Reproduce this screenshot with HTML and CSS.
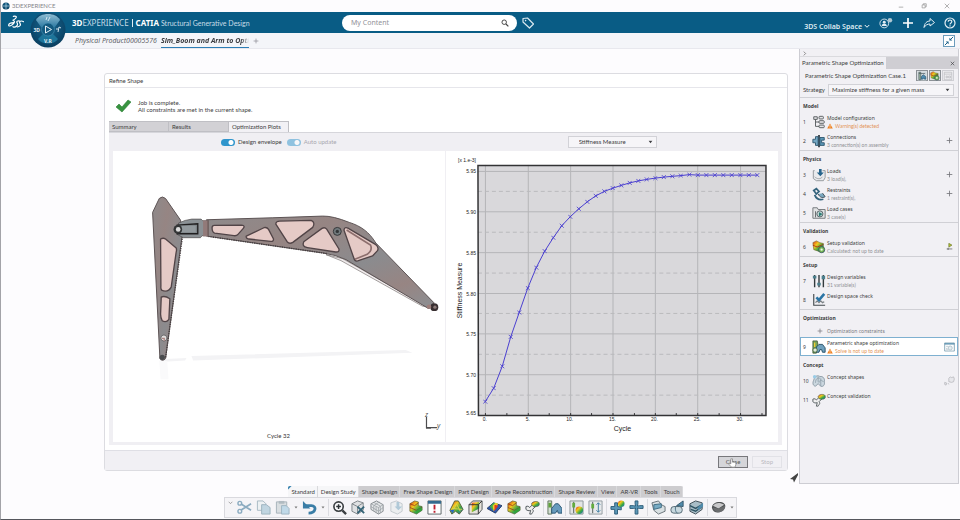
FILE: index.html
```html
<!DOCTYPE html>
<html lang="en">
<head>
<meta charset="utf-8">
<title>3DEXPERIENCE</title>
<link rel="stylesheet" href="styles.css">
</head>
<body>
<svg class="defs" aria-hidden="true">
  <defs>
    <linearGradient id="rainbow" x1="0" y1="0" x2="1" y2="1">
      <stop offset="0" stop-color="#e02a1c"/><stop offset=".35" stop-color="#f2c81d"/><stop offset=".65" stop-color="#38a845"/><stop offset="1" stop-color="#2467c4"/>
    </linearGradient>
    <linearGradient id="steel" x1="0" y1="0" x2="1" y2="1">
      <stop offset="0" stop-color="#8d8a8b"/><stop offset=".3" stop-color="#968583"/><stop offset=".6" stop-color="#8b8b8e"/><stop offset=".8" stop-color="#978583"/><stop offset="1" stop-color="#8b8f93"/>
    </linearGradient>
    <radialGradient id="dial" cx=".5" cy=".4" r=".6">
      <stop offset="0" stop-color="#1b6a93"/><stop offset=".7" stop-color="#0d4b70"/><stop offset="1" stop-color="#0a3d5e"/>
    </radialGradient>
    <linearGradient id="dialtop" x1="0" y1="0" x2="0" y2="1">
      <stop offset="0" stop-color="#8fbdd3"/><stop offset="1" stop-color="#2f7ba3"/>
    </linearGradient>
    <marker id="cross" viewBox="-3 -3 6 6" markerWidth="5" markerHeight="5" markerUnits="userSpaceOnUse">
      <path d="M-2.4-2.4 2.4 2.4M-2.4 2.4 2.4-2.4" stroke="#4a3fd0" stroke-width="1" fill="none"/>
    </marker>
  </defs>
  <symbol id="i-plus" viewBox="0 0 10 10"><path d="M5 1v8M1 5h8" stroke="currentColor" stroke-width="1.2" fill="none"/></symbol>
  <symbol id="i-close" viewBox="0 0 10 10"><path d="M1.5 1.5l7 7M8.5 1.5l-7 7" stroke="currentColor" stroke-width="1.3" fill="none"/></symbol>
  <symbol id="i-caret" viewBox="0 0 8 6"><path d="M1 1h6L4 5z" fill="currentColor"/></symbol>
  <symbol id="i-warn" viewBox="0 0 12 12"><path d="M6 .8 11.6 11H.4z" fill="#ee7f1d"/><path d="M6 4v3.6M6 8.6v1.3" stroke="#fff" stroke-width="1.3"/></symbol>
  <symbol id="i-tree" viewBox="0 0 16 16"><g fill="#e5e5e8" stroke="#4e5356"><path d="M2 2h4v3H2z"/><rect x="8" y="1.500" width="5" height="3" rx="1"/><rect x="8" y="6.500" width="6" height="3" rx="1"/><rect x="8" y="11.500" width="6" height="3" rx="1"/><path d="M4 5v8h4M4 8h4" fill="none"/></g></symbol>
  <symbol id="i-link" viewBox="0 0 16 16"><g stroke="#2b536b"><path d="M8 1v14" stroke="#2d3a40" stroke-width="2"/><path d="M7 3H4v3H1v4h3v3h3z" fill="#74a8c4"/><path d="M9 4h5v3h-3v3h3v3H9z" fill="#5c98b8"/></g></symbol>
  <symbol id="i-load" viewBox="0 0 16 16"><path d="M3 3H1.500v9L5 14.500h8L15 11V3h-3" fill="#e9eaed" stroke="#8b9196"/><path d="M3 10c3 3 7 3 9 0" fill="none" stroke="#9ba1a6"/><path d="M8 1h3v4h2.500l-4 4.500-4-4.500H8z" fill="#25638b"/></symbol>
  <symbol id="i-restraint" viewBox="0 0 16 16"><path d="M2 4l3-2 3 3-3 3zM3 9c2 5 6 6 10 5" fill="none" stroke="#35647d" stroke-width="2"/><path d="M7 8c2 4 5 5 8 3l-3-4" fill="#7aa7be" stroke="#37444b"/></symbol>
  <symbol id="i-folder" viewBox="0 0 16 16"><path d="M1 14V2h5l1 2h8v10z" fill="#e2e3e4" stroke="#6a6f72"/><circle cx="9" cy="9" r="3.500" fill="#bcd2d2" stroke="#4f5a5e"/><path d="M8 7v5l4-3z" fill="#2b7c73"/><path d="M4 6v7" stroke="#5a5f62"/></symbol>
  <symbol id="i-modulebox" viewBox="0 0 16 16"><path d="M1 1h14v14H1z" fill="#cfd8dc"/><path d="M3 14V2h3v12zM3 4h10" fill="#9fb9a2" stroke="#445156"/><path d="M7 13V9l3-3 4 3v4h-2l-1.500-2L9 13z" fill="#4f8cb0" stroke="#21506c"/></symbol>
  <symbol id="i-valid" viewBox="0 0 16 16"><path d="M1 3l4-2 4 2 4 1v4l-5 5-6-2z" fill="url(#rainbow)" stroke="#6a5a1c" stroke-width=".6"/><path d="M1 6l5 2 7-3" stroke="#b02c14" fill="none"/><circle cx="11" cy="11" r="3.500" fill="#77ba52" stroke="#35535f"/><circle cx="11" cy="11" r="1.300" fill="#eef4f0"/></symbol>
  <symbol id="i-sliders" viewBox="0 0 16 16"><path d="M3 1v14M8 1v14M13 1v14" stroke="#333a3d" stroke-width="1.600"/><path d="M3 2v3M8 10v3M13 2v4" stroke="#4c7f8d" stroke-width="4"/></symbol>
  <symbol id="i-space" viewBox="0 0 16 16"><path d="M2 1v13h13" fill="none" stroke="#43494d" stroke-width="1.300"/><path d="M4 11l2-2 2 2 2-2 2 2 2-1" fill="none" stroke="#7b8185" stroke-width="1.500"/><path d="M5 5l3 3 6-7" stroke="#2b75a5" stroke-width="3" fill="none"/></symbol>
  <symbol id="i-shape" viewBox="0 0 16 16"><path d="M1 15V1h5l1 5-2 9z" fill="#75a35b" stroke="#38482f" stroke-width=".8"/><path d="M5 14V8l3-3h4l3 4v5h-3l-1-3H9l-1 3z" fill="#6fa0bd" stroke="#1e4860"/><circle cx="3.500" cy="11.500" r="2.500" fill="#e3ead9" stroke="#436a3f"/><path d="M3 3v5" stroke="#f0cd34" stroke-width="1.500"/></symbol>
  <symbol id="i-concept" viewBox="0 0 16 16"><path d="M2 7C3 2 7 1 9 3c4-1 6 3 5 6 1 3-1 6-4 5l-3-3-3 3C0 13 1 9 2 7z" fill="#cbd7df" stroke="#83939f"/><path d="M4 10c0-5 3-6 5-5M8 10c0-3 3-4 5-1M7 3v6M10 5v9" fill="none" stroke="#91a1ac"/><circle cx="3" cy="3" r="2" fill="#99cbe6"/></symbol>
  <symbol id="i-branch" viewBox="0 0 16 16"><path d="M1 7c2-1 3 0 4 1l3-3 3 2-3 3c2 2 0 3-1 5H5l1-4c-2 1-4 0-5-1z" fill="#eee" stroke="#4c5357"/><path d="M7 4c1-3 7-3 8-1 1 3-1 4-3 4C9 8 7 6 7 4z" fill="url(#rainbow)" stroke="#4f5a41" stroke-width=".7"/></symbol>
  <symbol id="i-window" viewBox="0 0 16 14"><path d="M1 1h14v12H1z" fill="#fff" stroke="#56839a"/><path d="M1 2.500h14" stroke="#4d88a9" stroke-width="2"/><circle cx="9" cy="8.500" r="3" fill="#e6eef2" stroke="#9eb3bd"/><path d="M3 6h3M3 9h2M3 11h3" stroke="#a9b8bf"/></symbol>
  <symbol id="i-cut" viewBox="0 0 16 16"><path d="M4 4l11 7M4 11l11-7" stroke="#8babc0" stroke-width="1.800"/><circle cx="3" cy="3.500" r="2" fill="none" stroke="#8babc0" stroke-width="1.500"/><circle cx="3" cy="12" r="2" fill="none" stroke="#8babc0" stroke-width="1.500"/></symbol>
  <symbol id="i-copy" viewBox="0 0 16 16"><path d="M1.500 1h6l3 3v7h-9z" fill="#edf1f3" stroke="#a8b9c3"/><path d="M6 5h5l4 3v7H6z" fill="#c0d5e1" stroke="#9cb2be"/></symbol>
  <symbol id="i-paste" viewBox="0 0 16 16"><path d="M1.500 2h11v12h-11z" fill="#d9dee1" stroke="#a6b2ba"/><path d="M4 1h6v3H4z" fill="#b0bbc1"/><path d="M7 6h5l3 3v6H7z" fill="#c0d9e8" stroke="#9db4c1"/></symbol>
  <symbol id="i-undo" viewBox="0 0 16 16"><path d="M4 6h6c6 0 5 8-3 8" fill="none" stroke="#3a7da6" stroke-width="3"/><path d="M1 1v8h8z" fill="#3a7da6"/></symbol>
  <symbol id="i-find" viewBox="0 0 16 16"><circle cx="7" cy="7" r="5" fill="#f9f9fb" stroke="#3b3f42" stroke-width="1.700"/><path d="M11 11l4 4" stroke="#3b3f42" stroke-width="2.500"/><path d="M7 4.500v5M4.500 7h5" stroke="#2e3437" stroke-width="1.600"/></symbol>
  <symbol id="i-boxcut" viewBox="0 0 16 16"><path d="M1 4l6-3 6 2v8l-6 4-6-3z" fill="#dfe1e3" stroke="#7d8387"/><path d="M1 4l6 3 6-4M7 7v8" stroke="#7d8387" fill="none"/><path d="M7 7l7 7M14 7l-7 7" stroke="#356477" stroke-width="2"/></symbol>
  <symbol id="i-mesh" viewBox="0 0 16 16"><path d="M1 4l6-3 7 4v7l-5 3-8-5z" fill="#e4e6e8" stroke="#858b8f"/><path d="M1 4l8 4 5-3M9 8v7M4 2.500l7 4M4 6v6M6.500 7v7M1 7l8 5 5-4M4 6l6-4M11 7v7" stroke="#9ba1a5" fill="none" stroke-width=".8"/></symbol>
  <symbol id="i-import" viewBox="0 0 16 16"><path d="M2 3l6-2 6 3v8l-5 3-7-3z" fill="#eceef0" stroke="#c2c9ce"/><path d="M8 2h3v5h3l-4 4-4-4h2z" fill="#b0c9d8"/></symbol>
  <symbol id="i-result" viewBox="0 0 16 16"><path d="M2 4l5-3 4 1v4l4 1v4l-6 4-7-3z" fill="url(#rainbow)" stroke="#555b29" stroke-width=".7"/><path d="M2 4l5 2 4-3M2 8l7 3 6-3" stroke="#94301b" fill="none" stroke-width=".8"/><path d="M9 11l6-3v3l-6 4z" fill="#32a33a"/></symbol>
  <symbol id="i-alert" viewBox="0 0 16 16"><path d="M1 1h14v14H1z" fill="#fff" stroke="#5b6468"/><path d="M1 2.500h14" stroke="#346b8e" stroke-width="3"/><path d="M8 5v5M8 11.500v2" stroke="#be2130" stroke-width="2"/></symbol>
  <symbol id="i-peak" viewBox="0 0 16 16"><path d="M1 11L6 1h4l5 9-4 5-4-3-4 3z" fill="url(#rainbow)" stroke="#53633c"/><path d="M4 12L8 4l4 8M3 9l11 1" fill="none" stroke="#dcd34b"/><path d="M1 11l3 3 2-4z" fill="#2767c4"/></symbol>
  <symbol id="i-block" viewBox="0 0 16 16"><path d="M1 5l4-4h10v9l-4 5H1z" fill="#e8e3dc" stroke="#50555a"/><path d="M4 3l8-1v7l-8 4z" fill="url(#rainbow)"/><path d="M11 5v10M1 5h10l4-4" fill="none" stroke="#333" stroke-width="1"/></symbol>
  <symbol id="i-surf" viewBox="0 0 16 16"><path d="M0 9l7-6 9 3-7 8z" fill="#3058b0" stroke="#293e63"/><path d="M3 7l4-4 4 1-5 7z" fill="#45ad4d"/><path d="M6 6l3-3 3 1-5 8z" fill="#f0cf23"/><path d="M8 5l4 1-4 6z" fill="#dd3925"/></symbol>
  <symbol id="i-modules" viewBox="0 0 16 16"><path d="M1 15V1h4v14z" fill="#d3dfd1" stroke="#60735e"/><path d="M3 3v5" stroke="#61a23c" stroke-width="3"/><path d="M5 14V9l4-5h3l4 5v5h-4l-1-3-2 3z" fill="#679bbd" stroke="#2b5874"/></symbol>
  <symbol id="i-param" viewBox="0 0 16 16"><path d="M1 1h14v14H1z" fill="#e1e4e5" stroke="#8b9598"/><path d="M5 2v12" stroke="#4d5956"/><path d="M5 3v5" stroke="#63ab3e" stroke-width="3"/><circle cx="11" cy="11" r="4" fill="url(#rainbow)"/></symbol>
  <symbol id="i-range" viewBox="0 0 16 16"><path d="M1 1h14v14H1z" fill="#e7e9eb" stroke="#929ca0"/><path d="M5 2v12" stroke="#4d5956"/><path d="M5 4v5" stroke="#63ab3e" stroke-width="3"/><path d="M11 3v10M9 5l2-2 2 2M9 11l2 2 2-2" fill="none" stroke="#3a7ba0"/></symbol>
  <symbol id="i-cross" viewBox="0 0 16 16"><path d="M6.500 1h3v3L9 6.500l2.500-.5h3.500v3h-4l-2-.5.500 2.500v4h-3v-4l.5-2.500-2 .5H1V6h3.500l2.500.5-.5-2.500z" fill="#5b97b7" stroke="#2b5c79"/></symbol>
  <symbol id="i-crosscolor" viewBox="0 0 16 16"><path d="M5 3h3v4l4 .5v3L8 10v5H5v-5H1V7h4z" fill="#5b97b7" stroke="#2b5c79"/><circle cx="12" cy="4" r="3.500" fill="url(#rainbow)"/></symbol>
  <symbol id="i-solid" viewBox="0 0 16 16"><path d="M1 3l7-2 3 4 4 2v5l-7 3-5-4z" fill="#d9e0e3" stroke="#687177"/><path d="M3 5l8-1v4l-8 2z" fill="#77abc4" stroke="#3f6c83"/></symbol>
  <symbol id="i-cyl" viewBox="0 0 16 16"><rect x="1" y="7" width="12" height="7" rx="3" fill="#c8d8df" stroke="#50646f"/><path d="M6 7c-1 4 1 7 2 7" fill="none" stroke="#4c6f83"/><path d="M7 6l7-5v6z" fill="#518cad" stroke="#33566b"/></symbol>
  <symbol id="i-stack" viewBox="0 0 16 16"><path d="M1 4l6-3 7 2v7l-7 5-6-3z" fill="#a8bdc7" stroke="#3f4d55"/><path d="M1 6l6 3 7-4M2 10l5 2 7-5" fill="none" stroke="#2e5362" stroke-width="1.500"/><path d="M9 8l6-5v4l-5 4z" fill="#4f8bab"/></symbol>
  <symbol id="i-render" viewBox="0 0 16 16"><path d="M1 8c0-4 4-6 8-6 5 0 7 3 6 6-2 6-13 8-14 0z" fill="#4e5153"/><path d="M2 6c4-4 8-3 12-1L8 9z" fill="#c8c8ca"/><path d="M2 8l6 1 7-3c0 3-1 5-3 6-4 2-9 1-10-4z" fill="#6a6c6e"/></symbol>
</svg>

<div class="app">
  <header class="titlebar">
    <svg class="app-icon" viewBox="0 0 10 10"><circle cx="5" cy="5" r="4.500" fill="url(#dial)"/><path d="M1 5h8M5 1v8" stroke="#c4dbe6" stroke-width=".8"/></svg>
    <span>3DEXPERIENCE</span>
    <div class="window-buttons">
      <button aria-label="Minimize"><svg viewBox="0 0 8 8"><path d="M1 5.500h6" stroke="#999"/></svg></button>
      <button aria-label="Restore"><svg viewBox="0 0 8 8"><path d="M1.500 2.500h4v4h-4zM3 2.500V1h4v4H5.500" fill="none" stroke="#999"/></svg></button>
      <button aria-label="Close window"><svg viewBox="0 0 8 8"><path d="M1 1l6 6M7 1L1 7" stroke="#999"/></svg></button>
    </div>
  </header>

  <nav class="topbar">
    <svg class="logo" viewBox="0 0 48 44"><path d="M16 2c8-2 12 1 6 7-2 2-5 4-8 5 8 1 7 7-1 13C8 31 1 33 2 28c1-4 8-7 15-7M35 16c-7-1-10 1-8 5 2 3 3 6-1 10-3 3-8 4-11 2M47 18c-8-4-15-1-11 5 3 5 1 9-8 11" fill="none" stroke="#fff" stroke-width="3.500" stroke-linecap="round"/></svg>
    <button class="compass" aria-label="Compass">
      <svg viewBox="0 0 36 36"><circle cx="18" cy="18" r="17.500" fill="url(#dial)"/><path d="M6 8c4-8 20-8 24 0l-5 7H11z" fill="url(#dialtop)"/><path d="M8 27c4 6 16 6 20 0l-5-5H13z" fill="#1d7499"/><circle cx="18" cy="17.500" r="6.500" fill="#135a80" stroke="#4c95b9" stroke-width=".6"/><path d="M15.500 14v7l6-3.500z" fill="none" stroke="#e5eff5" stroke-width="1"/><path d="M16 8l1-3M18 9l2-4M28 20l1-5 2 1M26 17h2" stroke="#d2e4ee" fill="none"/><text x="3.500" y="20" class="dial-text">3D</text><text x="14" y="30.500" class="dial-text">V.R</text></svg>
    </button>
    <div class="brand"><b>3D</b>EXPERIENCE<i></i><b>CATIA</b><span>Structural Generative Design</span></div>
    <div class="search">
      <input type="search" aria-label="Search" placeholder="My Content">
      <button aria-label="Run search"><svg viewBox="0 0 10 10"><circle cx="4" cy="4" r="2.800" fill="none" stroke="#444" stroke-width="1.200"/><path d="M6.200 6.200l3 3" stroke="#444" stroke-width="1.500"/></svg></button>
    </div>
    <button class="tag" aria-label="Tags"><svg viewBox="0 0 12 12"><path d="M1 1.500L5.500 1l6 6L7.500 11 1 5z" fill="none" stroke="#d9e8ef" stroke-width="1.200" stroke-linejoin="round"/><circle cx="3.600" cy="3.600" r=".8" fill="#d9e8ef"/></svg></button>
    <div class="actions">
      <button class="space">3DS Collab Space<svg viewBox="0 0 8 6"><path d="M1 1l3 3 3-3" fill="none" stroke="#fff" stroke-width="1.300"/></svg></button>
      <button aria-label="Profile"><svg class="wide" viewBox="0 0 16 12"><circle cx="6" cy="6.500" r="5" fill="none" stroke="#e2edf3"/><circle cx="6" cy="5" r="1.700" fill="#e2edf3"/><path d="M3 9.500c0-4 6-4 6 0z" fill="#e2edf3"/><circle cx="12.500" cy="2.800" r="2.600" fill="#aec7d3"/></svg></button>
      <button aria-label="Add"><svg viewBox="0 0 12 12"><path d="M6 1v10M1 6h10" stroke="#fff" stroke-width="1.700"/></svg></button>
      <button aria-label="Share"><svg viewBox="0 0 12 12"><path d="M1 10.500C1.500 6 4 4 7 4V1.500L11.500 5.500 7 9V7C4.500 7 2.500 8 1 10.500z" fill="none" stroke="#e2edf3" stroke-linejoin="round"/></svg></button>
      <button aria-label="Help"><svg viewBox="0 0 12 12"><circle cx="6" cy="6" r="5" fill="none" stroke="#e2edf3" stroke-width="1.200"/><path d="M4.200 4.700c0-2.300 3.700-2.200 3.600 0C7.700 6 6 6 6 7.500M6 8.200v1.200" fill="none" stroke="#e2edf3" stroke-width="1.200"/></svg></button>
    </div>
  </nav>

  <div class="doc-tabs">
    <button>Physical Product00005576</button>
    <button class="current"><span>Sim_Boom and Arm to Opti</span></button>
    <button class="add" aria-label="New tab"><svg viewBox="0 0 10 10"><use href="#i-plus"/></svg></button>
    <button class="collapse" aria-label="Collapse"><svg viewBox="0 0 12 12"><path d="M6.500 5.500V2l3.500 3.500zM5.500 6.500V10L2 6.500z" fill="#185f88"/><path d="M7.500 4.500L11 1M4.500 7.500L1 11" stroke="#185f88" stroke-width="1.200"/></svg></button>
  </div>

  <main class="workspace">
    <section class="dialog">
      <h1>Refine Shape</h1>
      <div class="dialog-body">
        <div class="message">
          <svg viewBox="0 0 16 14"><path d="M1 8l3-3 3 3 6-7 3 2-9 10z" fill="#37933f" stroke="#2b8036" stroke-width=".6"/></svg>
          <p>Job is complete.<br>All constraints are met in the current shape.</p>
        </div>
        <div class="plot-tabs">
          <button>Summary</button><button>Results</button><button class="current">Optimization Plots</button>
        </div>
        <div class="plots">
          <div class="plot-tools">
            <div class="switches">
              <label><input type="checkbox" checked>Design envelope</label>
              <label class="off"><input type="checkbox" checked disabled>Auto update</label>
            </div>
            <div class="measure">
              <select aria-label="Plotted measure"><option>Stiffness Measure</option></select>
              <svg viewBox="0 0 8 6"><use href="#i-caret"/></svg>
            </div>
          </div>
          <div class="cards">
            <svg class="card" viewBox="113 151 333 292" role="img" aria-label="Optimized boom and arm">
              <g transform="translate(140 180) scale(.33333)">
                <path d="M155 530L800 512 820 520 160 544zM60 540l80-4-4 8-76 4z" fill="#f3f3f5"/>
                <path d="M58 545h24l4 55H62z" fill="#fafafb"/>
                <path d="M560 225l50 12 240 136 30 12-30-5-245-137z" fill="#f0ebec" stroke="#77716f" stroke-width="2"/>
                <path d="M200 120L400 114 550 109Q580 108 630 128C665 139 690 157 710 190L885 370 870 388 620 240Q590 225 550 220L200 169z" fill="url(#steel)" stroke="#5c5354" stroke-width="3"/>
                <path d="M38 98L58 56Q67 47 77 56L122 121 128 160 77 538Q67 548 60 538z" fill="url(#steel)" stroke="#5c5354" stroke-width="3"/>
                <path d="M128 170L77 535M205 170l360 52" stroke="#443d3f" stroke-width="4" stroke-dasharray="4 3" fill="none"/>
                <path d="M116 130l20-8 20-4h28l5 5h15v45h-17l-5 6h-52l-18-10z" fill="#8b9195" stroke="#4a4546" stroke-width="2"/>
                <path d="M190 122h17v48h-17z" fill="#927a79"/><path d="M205 121v48" stroke="#463f40" stroke-width="2"/>
                <path d="M112 136l62-4v30h-62z" fill="#7c8387" stroke="#201f20" stroke-width="4"/><path d="M124 138h44v20h-44z" fill="#92999d"/>
                <circle cx="114" cy="149" r="13" fill="#343637"/><circle cx="115" cy="149" r="7" fill="#ddd"/>
                <g fill="#e5cac6" stroke="#514447" stroke-width="4" stroke-linejoin="round">
                  <path d="M62 178q8-5 15 0l32 27q2 6 0 12L94 323q-10 18-29 9-3-5-2-12z"/>
                  <path d="M64 353q10-6 26 5l-3 62q-8 11-20 4-5-8-5-20z"/>
                  <path d="M217 144q0-7 7-7l82-1q12 2 5 10l-16 18q-4 5-12 4l-58-8q-8-2-8-16z"/>
                  <path d="M320 169l53-25q9-3 14 5l15 29q0 8-8 7l-66-7q-10-2-8-9z"/>
                  <path d="M409 133q0-9 12-9l94-2q14 6 5 21l-60 45q-10 6-17-2z"/>
                  <path d="M493 186l55-40q8-5 14 2l37 60q2 10-10 9l-85-13q-18-3-11-18z"/>
                  <path d="M614 151q2-11 12-6l84 50q10 8 5 18l-15 16-45 15q-8 2-11-8z"/>
                </g>
                <path d="M622 151l72 45q7 16-10 28l-37 15" fill="none" stroke="#8c6e6d" stroke-width="5"/>
                <circle cx="594" cy="155" r="12" fill="#70797c" stroke="#373739" stroke-width="3"/><circle cx="594" cy="155" r="5" fill="#333638"/>
                <circle cx="72" cy="476" r="9" fill="#e1dfdf" stroke="#4c4a4b" stroke-width="2"/><path d="M66 477h7v8" stroke="#ad8784" stroke-width="4" fill="none"/>
                <circle cx="67" cy="534" r="8" fill="#4a4c4e"/>
                <circle cx="886" cy="383" r="12" fill="#382f31"/><circle cx="888" cy="383" r="5" fill="#8b7a78"/><circle cx="870" cy="382" r="7" fill="#9d7e7b"/>
              </g>
              <path d="M427.500 418v10.500H438M427 429h5" stroke="#4d4d4f" stroke-width="1.200" fill="none"/>
              <text x="426" y="418" class="axis-name">z</text><text x="438" y="429" class="axis-name">y</text>
              <text x="279" y="439" class="cycle-label">Cycle 32</text>
            </svg>
            <svg class="card" viewBox="447 151 331 292" role="img" aria-label="Stiffness measure by cycle">
              <path d="M478 165h289v251H478z" fill="#d9d8db"/>
              <path d="M485.500 165v251M528.500 165v251M571 165v251M613.500 165v251M656 165v251M698.500 165v251M741.500 165v251M478 171.500h289M478 212h289M478 253h289M478 294h289M478 334.500h289M478 375.500h289" stroke="#b5b5b8" fill="none"/>
              <path d="M478 191.500h289M478 232.500h289M478 273.500h289M478 314h289M478 355h289M478 396h289" stroke="#bababd" stroke-dasharray="4 3" fill="none"/>
              <path d="M478 165.500h289v251H478.500z" fill="none" stroke="#333335" stroke-width="1.500"/>
              <path d="M485.500 416v-2M507 416v-2M528.500 416v-2M549.500 416v-2M571 416v-2M592 416v-2M613.500 416v-2M635 416v-2M656 416v-2M677 416v-2M698.500 416v-2M720 416v-2M741.500 416v-2M763 416v-2" stroke="#333335"/>
              <polyline class="curve" points="485.300,402.500 493.800,389 502.400,367 510.900,337.500 519.400,313 528,288.500 536.500,268 545,251.500 553.600,238 562.100,226 570.600,217 579.200,209 587.700,202 596.200,196 604.800,191.500 613.300,188.300 621.800,185.500 630.300,183 638.900,181 647.400,179.500 656,178.200 664.500,177.200 673,176.400 681.600,175.700 690.100,174.700 698.600,175.200 707.200,175.200 715.700,175.200 724.200,175.200 732.700,175.200 741.300,175.200 749.800,175.200 758.300,175.200"/>
              <g class="ticks-y"><text x="476" y="173">5.95</text><text x="476" y="214">5.90</text><text x="476" y="255">5.85</text><text x="476" y="296">5.80</text><text x="476" y="337">5.75</text><text x="476" y="378">5.70</text><text x="476" y="416">5.65</text><text x="476" y="162">[x 1.e-3]</text></g>
              <g class="ticks-x"><text x="485" y="422">0.</text><text x="528" y="422">5.</text><text x="570" y="422">10.</text><text x="613" y="422">15.</text><text x="655" y="422">20.</text><text x="698" y="422">25.</text><text x="741" y="422">30.</text></g>
              <text x="623" y="432" class="axis-title">Cycle</text>
              <text transform="translate(462 291) rotate(-90)" class="axis-title">Stiffness Measure</text>
            </svg>
          </div>
        </div>
      </div>
      <footer>
        <button class="close">Close<svg class="pointer" viewBox="0 0 10 12"><path d="M3 1v6L1 6v2l3 3h4l1-3V5H5V1z" fill="#fff" stroke="#777" stroke-width=".8"/></svg></button>
        <button disabled>Stop</button>
      </footer>
    </section>

    <aside class="assistant">
      <div class="grip"><svg viewBox="0 0 6 8"><path d="M1 1l3 3-3 3" stroke="#555" fill="none"/></svg></div>
      <div class="panel-tab"><h2>Parametric Shape Optimization</h2><button aria-label="Close panel"><svg viewBox="0 0 10 10"><use href="#i-close"/></svg></button></div>
      <div class="case">
        <span>Parametric Shape Optimization Case.1</span>
        <button aria-label="Modules"><svg viewBox="0 0 16 16"><use href="#i-modulebox"/></svg></button>
        <button aria-label="Results"><svg viewBox="0 0 16 16"><use href="#i-valid"/></svg></button>
        <button aria-label="Report" disabled><svg viewBox="0 0 16 16"><path d="M2 2h12v12H2zM2 5h12M5 8h2v3H5zM9 8h3v3H9z" fill="none" stroke="#b5b5ba"/></svg></button>
      </div>
      <div class="strategy">
        <label for="strategy">Strategy</label>
        <div class="pick"><select id="strategy"><option>Maximize stiffness for a given mass</option></select><svg viewBox="0 0 8 6"><use href="#i-caret"/></svg></div>
      </div>

      <section>
        <h3>Model</h3>
        <div class="step"><em>1</em><svg viewBox="0 0 16 16"><use href="#i-tree"/></svg><div><p>Model configuration</p><small class="warn"><svg viewBox="0 0 12 12"><use href="#i-warn"/></svg>Warning(s) detected</small></div></div>
        <div class="step"><em>2</em><svg viewBox="0 0 16 16"><use href="#i-link"/></svg><div><p>Connections</p><small>3 connection(s) on assembly</small></div><button aria-label="Add connection"><svg viewBox="0 0 10 10"><use href="#i-plus"/></svg></button></div>
      </section>
      <section>
        <h3>Physics</h3>
        <div class="step"><em>3</em><svg viewBox="0 0 16 16"><use href="#i-load"/></svg><div><p>Loads</p><small>3 load(s),</small></div><button aria-label="Add load"><svg viewBox="0 0 10 10"><use href="#i-plus"/></svg></button></div>
        <div class="step"><em>4</em><svg viewBox="0 0 16 16"><use href="#i-restraint"/></svg><div><p>Restraints</p><small>1 restraint(s),</small></div><button aria-label="Add restraint"><svg viewBox="0 0 10 10"><use href="#i-plus"/></svg></button></div>
        <div class="step"><em>5</em><svg viewBox="0 0 16 16"><use href="#i-folder"/></svg><div><p>Load cases</p><small>3 case(s)</small></div></div>
      </section>
      <section>
        <h3>Validation</h3>
        <div class="step"><em>6</em><svg viewBox="0 0 16 16"><use href="#i-valid"/></svg><div><p>Setup validation</p><small>Calculated: not up to date</small></div><button aria-label="Run validation"><svg viewBox="0 0 10 10"><path d="M4 .5v5.500L8.500 3z" fill="#b6cc2f" stroke="#596022" stroke-width=".8"/><path d="M1 8.500h8M3 7v3" stroke="#555"/></svg></button></div>
      </section>
      <section>
        <h3>Setup</h3>
        <div class="step"><em>7</em><svg viewBox="0 0 16 16"><use href="#i-sliders"/></svg><div><p>Design variables</p><small>31 variable(s)</small></div></div>
        <div class="step"><em>8</em><svg viewBox="0 0 16 16"><use href="#i-space"/></svg><div><p>Design space check</p><small></small></div></div>
      </section>
      <section>
        <h3>Optimization</h3>
        <button class="constraints"><svg viewBox="0 0 10 10"><use href="#i-plus"/></svg>Optimization constraints</button>
        <div class="step selected"><em>9</em><svg viewBox="0 0 16 16"><use href="#i-shape"/></svg><div><p>Parametric shape optimization</p><small class="warn"><svg viewBox="0 0 12 12"><use href="#i-warn"/></svg>Solve is not up to date</small></div><button class="big" aria-label="Open results"><svg viewBox="0 0 16 14"><use href="#i-window"/></svg></button></div>
      </section>
      <section class="plain">
        <h3>Concept</h3>
        <div class="step"><em>10</em><svg viewBox="0 0 16 16"><use href="#i-concept"/></svg><div><p>Concept shapes</p><small></small></div><button class="big faint" aria-label="Generate shapes"><svg viewBox="0 0 16 14"><path d="M7 3l2-2 2 1 3-1 1 3-1 4-3 1-4-1zM1 9l3 1-1 3-2-1zM6 10l1 2" fill="#e4e4e8" stroke="#94969a"/></svg></button></div>
        <div class="step"><em>11</em><svg viewBox="0 0 16 16"><use href="#i-branch"/></svg><div><p>Concept validation</p><small></small></div></div>
      </section>
      <svg class="resize" viewBox="0 0 9 10"><path d="M8 0L0 6l3 .5 1 3L8 2z" fill="#444"/></svg>
    </aside>
  </main>

  <div class="action-bar">
    <div class="bar-tabs">
      <button class="current">Standard</button><button class="current">Design Study</button><button>Shape Design</button><button>Free Shape Design</button><button>Part Design</button><button>Shape Reconstruction</button><button>Shape Review</button><button>View</button><button>AR-VR</button><button>Tools</button><button>Touch</button>
    </div>
    <div class="tools">
      <button class="fold" aria-label="Fold"><svg viewBox="0 0 8 6"><path d="M1 1l3 3 3-3" fill="none" stroke="#777"/></svg></button>
      <button aria-label="Cut"><svg viewBox="0 0 16 16"><use href="#i-cut"/></svg></button>
      <button aria-label="Copy"><svg viewBox="0 0 16 16"><use href="#i-copy"/></svg></button>
      <button aria-label="Paste"><svg viewBox="0 0 16 16"><use href="#i-paste"/></svg></button>
      <button class="more" aria-label="Paste options"><svg viewBox="0 0 8 6"><use href="#i-caret"/></svg></button>
      <button aria-label="Undo"><svg viewBox="0 0 16 16"><use href="#i-undo"/></svg></button>
      <button class="more" aria-label="Undo history"><svg viewBox="0 0 8 6"><use href="#i-caret"/></svg></button>
      <hr>
      <button aria-label="Find"><svg viewBox="0 0 16 16"><use href="#i-find"/></svg></button>
      <button aria-label="Partition"><svg viewBox="0 0 16 16"><use href="#i-boxcut"/></svg></button>
      <button aria-label="Mesh"><svg viewBox="0 0 16 16"><use href="#i-mesh"/></svg></button>
      <button aria-label="Import"><svg viewBox="0 0 16 16"><use href="#i-import"/></svg></button>
      <button aria-label="Results"><svg viewBox="0 0 16 16"><use href="#i-result"/></svg></button>
      <button aria-label="Diagnostics"><svg viewBox="0 0 16 16"><use href="#i-alert"/></svg></button>
      <hr>
      <button aria-label="Stress"><svg viewBox="0 0 16 16"><use href="#i-peak"/></svg></button>
      <button aria-label="Section"><svg viewBox="0 0 16 16"><use href="#i-block"/></svg></button>
      <button aria-label="Surface"><svg viewBox="0 0 16 16"><use href="#i-surf"/></svg></button>
      <button aria-label="Field"><svg viewBox="0 0 16 16"><use href="#i-result"/></svg></button>
      <button aria-label="Concept"><svg viewBox="0 0 16 16"><use href="#i-branch"/></svg></button>
      <hr>
      <button aria-label="Modules"><svg viewBox="0 0 16 16"><use href="#i-modules"/></svg></button>
      <hr>
      <button aria-label="Parameters"><svg viewBox="0 0 16 16"><use href="#i-param"/></svg></button>
      <button aria-label="Range"><svg viewBox="0 0 16 16"><use href="#i-range"/></svg></button>
      <hr>
      <button aria-label="Validate joint"><svg viewBox="0 0 16 16"><use href="#i-crosscolor"/></svg></button>
      <button aria-label="Joint"><svg viewBox="0 0 16 16"><use href="#i-cross"/></svg></button>
      <hr>
      <button aria-label="Solid"><svg viewBox="0 0 16 16"><use href="#i-solid"/></svg></button>
      <button aria-label="Cylinder"><svg viewBox="0 0 16 16"><use href="#i-cyl"/></svg></button>
      <button aria-label="Stack"><svg viewBox="0 0 16 16"><use href="#i-stack"/></svg></button>
      <hr>
      <button aria-label="Rendering"><svg viewBox="0 0 16 16"><use href="#i-render"/></svg></button>
      <button class="more" aria-label="Rendering options"><svg viewBox="0 0 8 6"><use href="#i-caret"/></svg></button>
    </div>
  </div>
</div>
</body>
</html>
```
FILE: styles.css
```css
* { box-sizing: border-box; }
body { margin: 0; font: 6px/8px Lato, "Noto Sans", sans-serif; color: #3c3d40; background: #fdfcfe; }
button, input, select { font: inherit; color: inherit; margin: 0; padding: 0; border: 0; background: none; }
button { display: flex; align-items: center; justify-content: center; white-space: nowrap; }
h1, h2, h3, p { margin: 0; font-size: inherit; font-weight: 400; }
svg { display: block; flex: none; }
.defs { position: absolute; width: 0; height: 0; }
.app { display: flex; flex-direction: column; min-height: 100vh; border-left: 1px solid #a3a3a8; border-bottom: 1px solid #55565c; }

.titlebar { display: flex; align-items: center; height: 12px; padding-left: 1px; gap: 2px; color: #85858a; }
.app-icon { width: 8px; height: 8px; }
.window-buttons { display: flex; gap: 17px; margin-left: auto; padding-right: 10px; }
.window-buttons svg { width: 6px; height: 6px; }

.topbar { position: relative; display: flex; align-items: center; height: 21px; background: #095c85; color: #dfebf1; font-family: "Noto Sans", sans-serif; font-size: 7px; }
.logo { width: 16px; height: 16px; margin-left: 7px; }
.compass { position: absolute; left: 29px; top: 0; z-index: 1; }
.compass svg { width: 36px; height: 36px; }
.dial-text { font: bold 5px "Noto Sans", sans-serif; fill: #e4eef4; }
.brand { display: flex; align-items: center; width: 270px; margin-left: 48px; font-size: 8px; color: #c8dde8; }
.brand b { color: #fff; }
.brand i { width: 1px; height: 8px; margin: 0 3px; background: #e0edf3; }
.brand span { margin-left: 2px; font-family: Lato, sans-serif; font-size: 7px; }
.search { display: flex; align-items: center; width: 175px; height: 16px; padding: 0 8px 0 9px; border-radius: 8px; background: #fff; }
.search input { flex: 1; min-width: 0; outline: 0; appearance: none; }
.search input::placeholder { color: #929298; opacity: 1; }
.search svg { width: 8px; height: 8px; }
.tag { margin-left: 5px; }
.tag svg { width: 12px; height: 12px; }
.actions { display: flex; align-items: center; gap: 9px; margin-left: auto; padding-right: 4px; }
.actions svg { width: 12px; height: 12px; }
.actions .wide { width: 14px; }
.actions .space { padding-top: 8px; font-weight: 600; }
.actions .space svg { width: 6px; height: 5px; margin-left: 2px; }

.doc-tabs { display: flex; align-items: stretch; height: 16px; padding-left: 74px; background: #f4f5f9; border-bottom: 1px solid #e8e8ee; font-family: "Noto Sans", sans-serif; font-size: 7px; font-style: italic; color: #606166; }
.doc-tabs .current { justify-content: flex-start; width: 88px; margin-left: 4px; padding-top: 1px; overflow: hidden; border-bottom: 1px solid #2d7db5; color: #3b3c40; font-weight: 700; }
.doc-tabs .current span { width: 88px; overflow: hidden; text-align: left; mask-image: linear-gradient(90deg, #000 80px, transparent 88px); }
.doc-tabs .add { margin-left: 4px; color: #909096; }
.doc-tabs .add svg { width: 6px; height: 6px; }
.doc-tabs .collapse { align-self: center; width: 12px; height: 12px; margin: 0 5px 0 auto; border: 1px solid #6c9cbc; background: #fff; }
.doc-tabs .collapse svg { width: 10px; height: 10px; }

.workspace { display: flex; flex: 1; }
.dialog { display: flex; flex-direction: column; flex: 1; min-width: 0; margin: 24px 11px 13px 103px; border: 1px solid #dcdce1; border-radius: 3px; background: #fff; }
.dialog h1 { height: 14px; padding: 2px 4px; border-bottom: 1px solid #e6e6eb; line-height: 9px; }
.dialog-body { display: flex; flex-direction: column; flex: 1; padding: 10px 5px 5px 4px; }
.message { display: flex; align-items: center; gap: 7px; padding-left: 6px; height: 15px; line-height: 7px; }
.message svg { width: 16px; height: 14px; }
.plot-tabs { display: flex; height: 11px; margin-top: 8px; }
.plot-tabs button { width: 60px; justify-content: flex-start; padding-left: 3px; background: #d2d1d5; border: 1px solid #bfbfc4; border-left-width: 0; }
.plot-tabs .current { background: #f2f1f5; border-bottom: 0; }
.plots { display: flex; flex-direction: column; flex: 1; padding: 0 4px 3px; background: #f0eff3; border-top: 1px solid #d6d6db; }
.plot-tools { display: grid; grid-template-columns: 1fr 1fr; gap: 2px; height: 18px; align-items: center; }
.switches { display: flex; justify-content: center; gap: 5px; }
.switches label { display: flex; align-items: center; gap: 3px; }
.switches .off { color: #a7a7ae; }
.switches input { appearance: none; width: 14px; height: 7px; border-radius: 4px; background: radial-gradient(circle at 10px 50%, #fff 2px, #2f95cc 3px); }
.switches .off input { opacity: .5; }
.measure, .pick { position: relative; display: flex; align-items: center; border: 1px solid #d2d2d7; background: #f6f5f8; }
.measure { justify-self: center; width: 89px; height: 12px; }
.measure select { width: 100%; padding-left: 10px; appearance: none; }
.measure svg, .pick svg { position: absolute; right: 3px; width: 5px; height: 4px; pointer-events: none; }
.cards { display: grid; grid-template-columns: 1fr 1fr; gap: 1px; flex: 1; }
.card { contain: size; width: 100%; height: 100%; background: #fff; }
.axis-name { font: italic 7px "Noto Sans", sans-serif; fill: #555; }
.cycle-label { font: 6px Lato, sans-serif; text-anchor: middle; fill: #333; }
.curve { fill: none; stroke: #4a3fd0; stroke-width: 1; marker: url(#cross); }
.ticks-x, .ticks-y { font: 5px "Liberation Sans", sans-serif; fill: #222; }
.ticks-x { text-anchor: middle; }
.ticks-y { text-anchor: end; }
.axis-title { font: 7px "Liberation Sans", sans-serif; text-anchor: middle; fill: #222; }
.dialog footer { display: flex; align-items: center; justify-content: flex-end; gap: 4px; height: 20px; padding: 2px 5px 0 0; border-top: 1px solid #dfdfe5; background: #f1f0f4; }
.dialog footer button { position: relative; width: 30px; height: 12px; border: 1px solid #e2e2e7; color: #b9b9be; }
.dialog footer .close { border-color: #77777b; background: #d5d5d9; color: #555; }
.pointer { position: absolute; left: 9px; top: 1px; width: 9px; height: 10px; }

.assistant { position: relative; width: 160px; margin: 0 1px 0 0; background: #f1f0f4; border: 1px solid #cdcdd3; border-top: 0; }
.grip { height: 8px; padding: 2px 3px; border-bottom: 1px solid #dadade; }
.grip svg { width: 4px; height: 5px; }
.panel-tab { display: flex; height: 12px; background: #cfced3; }
.panel-tab h2 { width: 86px; padding: 1px 2px; background: #f1f0f4; line-height: 10px; white-space: nowrap; }
.panel-tab button { margin-left: auto; padding-right: 3px; }
.panel-tab svg { width: 5px; height: 5px; }
.case { display: flex; align-items: center; gap: 1px; height: 13px; padding: 0 4px 0 5px; }
.case span { flex: 1; white-space: nowrap; }
.case button { width: 12px; height: 11px; border: 1px solid #8c9196; background: #dddfe2; }
.case button:disabled { border-color: #cfcfd4; background: #eeeef1; }
.case svg { width: 10px; height: 10px; }
.strategy { display: flex; align-items: center; gap: 3px; height: 15px; padding: 0 4px 0 3px; }
.strategy label { width: 22px; }
.pick { flex: 1; height: 12px; }
.pick select { width: 100%; padding-left: 3px; appearance: none; }
.assistant section { border-top: 1px solid #d0d0d5; font-family: "Noto Sans", sans-serif; font-size: 5px; }
.assistant .plain { border-top-color: transparent; }
.assistant h3 { height: 14px; padding: 4px 3px 0; font-weight: 700; }
.step { display: flex; align-items: center; height: 19px; padding: 0 5px 0 3px; }
.step em { width: 9px; font-style: normal; }
.step > svg { width: 14px; height: 14px; margin-right: 1px; }
.step > div { flex: 1; white-space: nowrap; }
.step p { line-height: 8px; }
.step small { display: flex; align-items: center; gap: 2px; height: 7px; font-family: Lato, sans-serif; font-size: 5px; color: #909095; }
.step small svg { width: 6px; height: 6px; }
.step .warn { color: #e39254; }
.step button { color: #77777c; }
.step button svg { width: 7px; height: 7px; }
.step .big { margin-right: -2px; }
.step .big svg { width: 11px; height: 10px; }
.step .faint { opacity: .7; }
.constraints { height: 13px; gap: 4px; padding-left: 17px; color: #77777c; }
.constraints svg { width: 6px; height: 6px; }
.selected { outline: 1px solid #7eb0d0; outline-offset: -1px; background: #fff; }
.resize { position: absolute; left: -10px; bottom: 0; width: 9px; height: 10px; }

.action-bar { align-self: center; display: flex; flex-direction: column; align-items: center; padding: 2px 0 1px; }
.bar-tabs { display: flex; height: 11px; margin-left: 10px; border-radius: 2px 2px 0 0; overflow: hidden; background: #cdcccf; }
.bar-tabs button { padding: 0 2px 0 3px; border-right: 1px solid #d9d9dc; }
.bar-tabs .current { background: #f6f6f8; }
.bar-tabs .current:first-child { background: linear-gradient(135deg, #2f7fae 2px, #f6f6f8 3px); }
.tools { display: flex; align-items: center; height: 21px; border: 1px solid #d9d9de; background: #f5f4f7; }
.tools button { width: 19px; height: 19px; }
.tools svg { width: 15px; height: 15px; }
.tools .fold { align-items: flex-start; width: 10px; padding-top: 3px; }
.tools .fold svg { width: 5px; height: 4px; }
.tools .more { width: 8px; color: #777; }
.tools .more svg { width: 4px; height: 3px; }
.tools hr { width: 1px; height: 17px; margin: 0 1px; border: 0; background: #dcdce1; }
```
